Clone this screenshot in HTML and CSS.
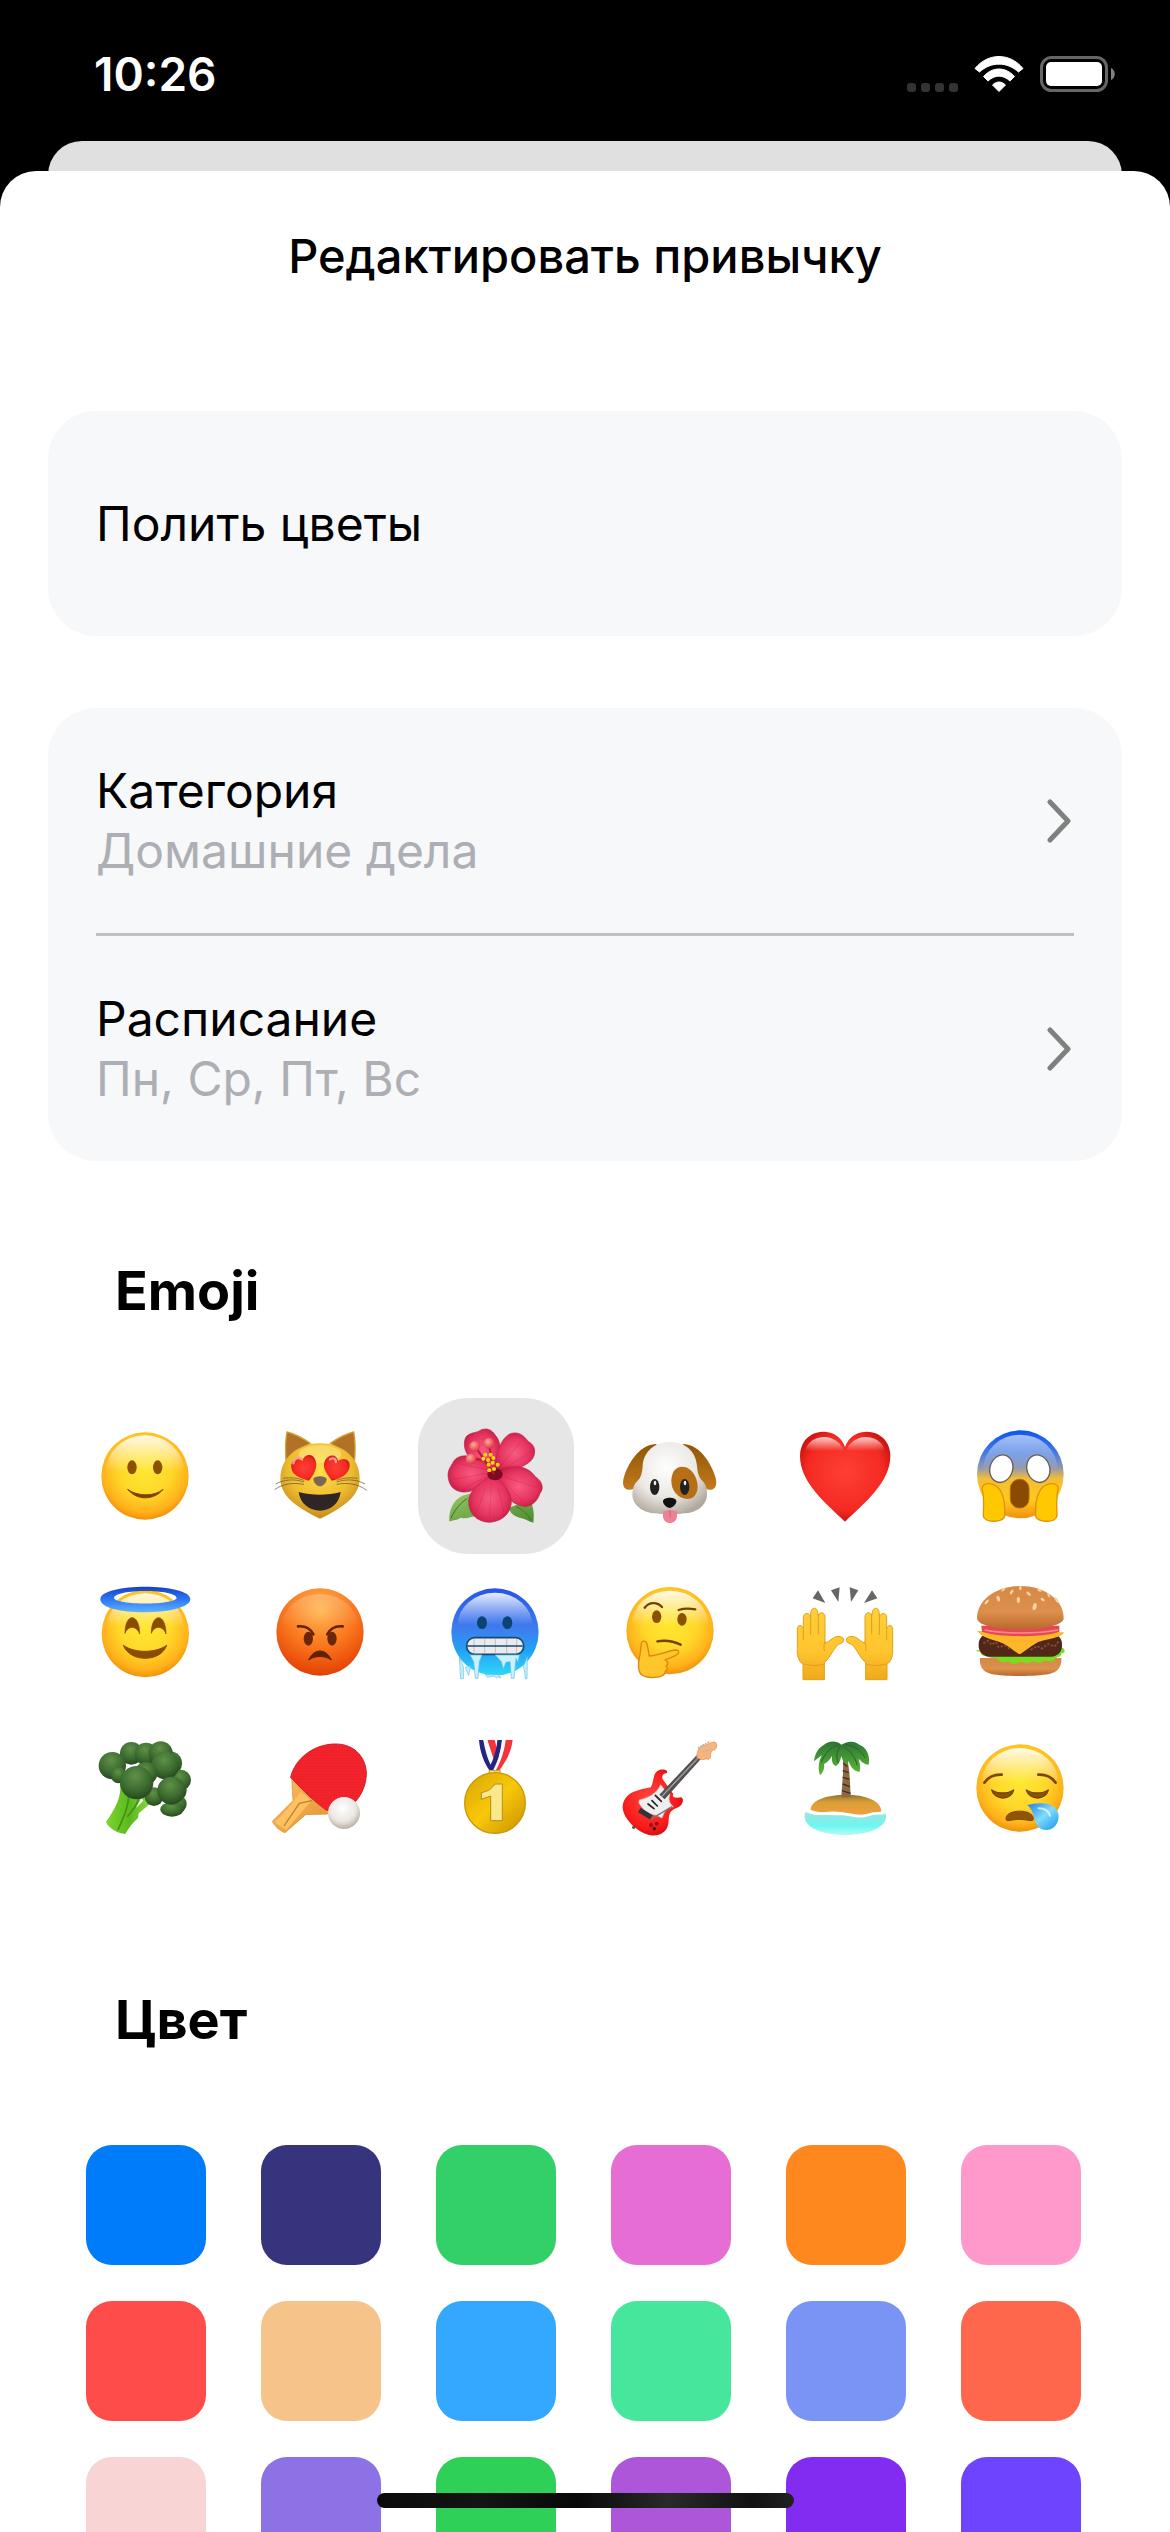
FILE: index.html
```html
<!DOCTYPE html>
<html lang="ru">
<head>
<meta charset="utf-8">
<meta name="viewport" content="width=device-width, initial-scale=1">
<title>Редактировать привычку</title>
<link rel="stylesheet" href="styles.css">
</head>
<body>
<svg class="defs" aria-hidden="true">
  <defs>
    <radialGradient id="yellow" cx=".5" cy=".42" r=".6"><stop offset="0" stop-color="#ffe832"/><stop offset=".5" stop-color="#ffd829"/><stop offset=".82" stop-color="#ffb21a"/><stop offset="1" stop-color="#ee8a08"/></radialGradient>
    <linearGradient id="shine" x1="0" y1="0" x2="0" y2="1"><stop offset="0" stop-color="#fff" stop-opacity=".9"/><stop offset=".5" stop-color="#fff" stop-opacity="0"/></linearGradient>
    <radialGradient id="angry" cx=".5" cy=".25" r=".78"><stop offset="0" stop-color="#ffb54f"/><stop offset=".5" stop-color="#fb7a20"/><stop offset="1" stop-color="#e23c02"/></radialGradient>
    <linearGradient id="cold" x1="0" y1="0" x2="0" y2="1"><stop offset="0" stop-color="#2456e8"/><stop offset=".45" stop-color="#3f7bee"/><stop offset=".7" stop-color="#22a0f5"/><stop offset="1" stop-color="#2fd8fb"/></linearGradient>
    <linearGradient id="scared" x1="0" y1="0" x2="0" y2="1"><stop offset="0" stop-color="#0a55f5"/><stop offset=".25" stop-color="#4479e0"/><stop offset=".42" stop-color="#8e96b4"/><stop offset=".55" stop-color="#f3bd35"/><stop offset=".8" stop-color="#ffc81f"/><stop offset="1" stop-color="#f0900f"/></linearGradient>
    <linearGradient id="halo" x1="0" y1="0" x2="0" y2="1"><stop offset="0" stop-color="#1740c4"/><stop offset=".5" stop-color="#2f78f5"/><stop offset="1" stop-color="#5cb4ff"/></linearGradient>
    <radialGradient id="catface" cx=".5" cy=".35" r=".65"><stop offset="0" stop-color="#ffe04a"/><stop offset=".6" stop-color="#efbd30"/><stop offset="1" stop-color="#c58a1c"/></radialGradient>
    <radialGradient id="red" cx=".5" cy=".45" r=".6"><stop offset="0" stop-color="#ff4034"/><stop offset=".7" stop-color="#f42a22"/><stop offset="1" stop-color="#bf0d0a"/></radialGradient>
    <radialGradient id="petal" cx=".5" cy=".5" r=".6"><stop offset="0" stop-color="#f75b82"/><stop offset=".6" stop-color="#e63560"/><stop offset="1" stop-color="#bd1740"/></radialGradient>
    <linearGradient id="leaf" x1="0" y1="0" x2="1" y2="1"><stop offset="0" stop-color="#96c764"/><stop offset="1" stop-color="#4d8a30"/></linearGradient>
    <radialGradient id="bead" cx=".4" cy=".35" r=".65"><stop offset="0" stop-color="#ffa9a0"/><stop offset="1" stop-color="#e2343c"/></radialGradient>
    <radialGradient id="white" cx=".45" cy=".35" r=".68"><stop offset="0" stop-color="#fff"/><stop offset=".6" stop-color="#ebe8e4"/><stop offset="1" stop-color="#b1a99d"/></radialGradient>
    <linearGradient id="ear" x1="0" y1="0" x2="0" y2="1"><stop offset="0" stop-color="#8f5607"/><stop offset="1" stop-color="#c37a1c"/></linearGradient>
    <radialGradient id="floret" cx=".45" cy=".3" r=".7"><stop offset="0" stop-color="#5f9147"/><stop offset=".6" stop-color="#3d6c30"/><stop offset="1" stop-color="#26491f"/></radialGradient>
    <linearGradient id="stalk" x1="0" y1="0" x2="1" y2="0"><stop offset="0" stop-color="#7bd62c"/><stop offset=".5" stop-color="#5cb81f"/><stop offset="1" stop-color="#8edc4a"/></linearGradient>
    <pattern id="rubber" width="8" height="8" patternUnits="userSpaceOnUse"><rect width="8" height="8" fill="#f8252d"/><path d="M0 7h6M7 0v5" stroke="#d41822" stroke-width="1.5"/></pattern>
    <linearGradient id="wood" x1="0" y1="0" x2="1" y2="1"><stop offset="0" stop-color="#ffc063"/><stop offset="1" stop-color="#e1912f"/></linearGradient>
    <linearGradient id="gold" x1="0" y1="0" x2="1" y2="1"><stop offset="0" stop-color="#d9a500"/><stop offset=".5" stop-color="#f8c80a"/><stop offset="1" stop-color="#c98e00"/></linearGradient>
    <linearGradient id="bun" x1="0" y1="0" x2="0" y2="1"><stop offset="0" stop-color="#d68a46"/><stop offset=".6" stop-color="#dd8f4c"/><stop offset="1" stop-color="#b9682c"/></linearGradient>
    <linearGradient id="hand" x1="0" y1="0" x2="0" y2="1"><stop offset="0" stop-color="#ffd03a"/><stop offset=".6" stop-color="#ffc42e"/><stop offset="1" stop-color="#f0a91c"/></linearGradient>
    <linearGradient id="sea" x1="0" y1="0" x2="0" y2="1"><stop offset="0" stop-color="#9fe3e0"/><stop offset=".6" stop-color="#6cf7f0"/><stop offset="1" stop-color="#b5fbf6"/></linearGradient>
    <linearGradient id="sand" x1="0" y1="0" x2="0" y2="1"><stop offset="0" stop-color="#8b7435"/><stop offset=".35" stop-color="#d99e35"/><stop offset="1" stop-color="#f0a040"/></linearGradient>
    <linearGradient id="frond" x1="0" y1="0" x2="0" y2="1"><stop offset="0" stop-color="#2c7536"/><stop offset="1" stop-color="#5fba33"/></linearGradient>
    <linearGradient id="drop" x1="0" y1="0" x2="1" y2="1"><stop offset="0" stop-color="#1b7fe0"/><stop offset=".5" stop-color="#7fdcff"/><stop offset="1" stop-color="#1594e8"/></linearGradient>
    <radialGradient id="body" cx=".45" cy=".45" r=".6"><stop offset="0" stop-color="#ff4a45"/><stop offset=".7" stop-color="#f91c1c"/><stop offset="1" stop-color="#cf0b0f"/></radialGradient>
    <path id="heart-eye" d="M0 40C-20 26-42 12-38-12-34-36-10-40 0-22 10-40 36-38 38-14 40 10 20 28 0 40z"/>
    <g id="palm-hand">
      <path d="M129 899v-46c-14-10-18-26-17-48v-58c0-14 16-14 18 0v-36c1-14 19-14 21 0l2-16c2-14 19-14 20 2l2 10c3-13 20-11 20 4v78c8-1 14-8 26-16 14-7 30-4 30 8-1 10-13 8-22 18-14 18-22 38-36 49v51z" fill="url(#hand)" stroke="#e0a11c" stroke-width="3"/>
      <path d="M130 750v30M152 710v54M175 704v58M195 786c-4 10-4 16-2 26M132 852c20 6 42 6 60 0" fill="none" stroke="#dd9f1c" stroke-width="3" stroke-linecap="round"/>
    </g>
  </defs>
</svg>

<header class="status">
  <time class="clock">10:26</time>
  <div class="status-icons">
    <svg width="51" height="36" viewBox="0 0 51 36" fill="#333"><rect y="27" width="9" height="9" rx="3"/><rect x="14" y="27" width="9" height="9" rx="3"/><rect x="28" y="27" width="9" height="9" rx="3"/><rect x="42" y="27" width="9" height="9" rx="3"/></svg>
    <svg width="50" height="36" viewBox="0 0 50 36" fill="#fff"><path d="M1 12.500C14-3.500 36-3.500 49 12.500L44.500 16C33 5.500 17 5.500 5.500 16z" stroke="#fff" stroke-linejoin="round"/><path d="M9.500 20.500c9-10 22-10 31 0L36 25c-7-6.500-15-6.500-22 0z" stroke="#fff" stroke-linejoin="round"/><path d="M18.500 29c4-4 9-4 13 0L25 35.500z" stroke="#fff" stroke-linejoin="round"/></svg>
    <svg width="75" height="36" viewBox="0 0 75 36"><rect x="1.500" y="1.500" width="65" height="33" rx="10" fill="none" stroke="#666" stroke-width="3"/><rect x="6" y="6" width="56" height="24" rx="5" fill="#fff"/><path d="M71 12c5 2 5 10 0 12z" fill="#808080"/></svg>
  </div>
</header>
<div class="backdrop"></div>

<main class="sheet">
  <h1 class="title">Редактировать привычку</h1>
  <form class="form">
    <input class="name" type="text" value="Полить цветы" aria-label="Название привычки">

    <div class="options">
      <button class="option" type="button">
        <span class="option-text"><span>Категория</span><span class="option-value">Домашние дела</span></span>
        <svg class="chevron" viewBox="0 0 24 44"><path d="M3 3l18 19L3 41"/></svg>
      </button>
      <hr class="divider">
      <button class="option" type="button">
        <span class="option-text"><span>Расписание</span><span class="option-value">Пн, Ср, Пт, Вс</span></span>
        <svg class="chevron" viewBox="0 0 24 44"><path d="M3 3l18 19L3 41"/></svg>
      </button>
    </div>

    <section class="picker">
      <h2 class="heading">Emoji</h2>
      <div class="grid">
        <label class="cell"><input class="emoji-input" type="radio" name="emoji" aria-label="Улыбка">
          <svg class="emoji" viewBox="114 144 288 288"><circle cx="255" cy="288" r="131" fill="url(#yellow)"/><ellipse cx="255" cy="275" rx="117" ry="109" fill="url(#shine)"/><ellipse cx="216" cy="262" rx="14" ry="21" fill="#8d5200"/><ellipse cx="293" cy="262" rx="14" ry="21" fill="#8d5200"/><path d="M203 328c28 34 78 34 106 0-24 22-78 22-106 0z" fill="#7d4200" stroke="#7d4200" stroke-width="3" stroke-linejoin="round"/></svg></label>
        <label class="cell"><input class="emoji-input" type="radio" name="emoji" aria-label="Влюблённый кот">
          <svg class="emoji" viewBox="639 144 288 288"><path d="M678 240c-2-30-2-60 3-84 24 6 50 20 70 34zM884 240c2-30 2-60-3-84-24 6-50 20-70 34z" fill="#b17227" stroke="#d6a133" stroke-width="4"/><path d="M780 190c60 0 119 38 119 106 0 58-62 92-119 120-57-28-119-62-119-120 0-68 59-106 119-106z" fill="url(#catface)"/><ellipse cx="780" cy="222" rx="64" ry="27" fill="#fff2a0" opacity=".45"/><use href="#heart-eye" transform="translate(734 264) rotate(-18)" fill="url(#red)"/><use href="#heart-eye" transform="translate(828 264) rotate(18)" fill="url(#red)"/><path d="M700 250c2-14 14-20 24-14M810 238c10-7 18 0 18 8" stroke="#ff9d98" stroke-width="7" fill="none" stroke-linecap="round"/><path d="M760 296c4-10 36-10 40 0 0 12-12 23-20 23s-20-11-20-23z" fill="#7b6653"/><path d="M716 336c40 11 86 11 126 0-4 34-30 56-62 56s-60-22-64-56z" fill="#2e2524"/><path d="M732 306c-30-10-60-8-85 6M732 313c-32-6-64-2-88 16M732 301c-22-8-42-9-62-6M830 306c30-10 60-8 85 6M830 313c32-6 64-2 90 18M830 301c22-8 42-9 62-6" fill="none" stroke="#5c4d35" stroke-width="2"/></svg></label>
        <label class="cell"><input class="emoji-input" type="radio" name="emoji" aria-label="Гибискус" checked>
          <svg class="emoji" viewBox="114 144 288 288"><path d="M118 425c-2-48 22-80 64-84l20 66c-20 2-34 12-50 6-10 8-22 6-34 12zM370 428c4-34-2-60-14-68l-60 24c6 20 22 26 36 30 12 2 22 10 38 14z" fill="url(#leaf)"/><path d="M122 415c14-28 30-46 50-60M364 420c-16-22-30-34-46-40" stroke="#3e7429" stroke-width="3" fill="none"/><g fill="url(#petal)" stroke="#c32148" stroke-width="2"><path d="M254 280c-50-20-98-50-90-98 4-24 28-22 42-28 20-14 40-6 50 12 20 20 20 70-2 114z"/><path d="M254 280c0-52 20-120 58-121 24-2 34 16 44 26 14 8 22 22 16 42-10 32-70 46-118 53z"/><path d="M254 280c-36 44-80 66-112 52-20-8-28-28-28-50 2-18 12-28 18-40 20-26 84-20 122 38z"/><path d="M256 278c40-26 94-26 120 12 22 14 26 36 14 50-8 26-30 44-54 38-38-8-68-46-80-100z"/><path d="M248 284c34 22 64 60 54 96-8 30-36 46-66 47-36-2-62-28-60-66 2-30 34-54 72-77z"/></g><path d="M244 310l-6 105M226 325l-26 72M264 325l18 72M235 270l-92-20M230 280l-100 18M240 286l-70 34M260 270l70-80M270 274l95-60M286 292l95 30M280 305l60 60M244 268l-50-80M250 262l-12-70" stroke="#b51b45" stroke-width="2" opacity=".4"/><ellipse cx="255" cy="283" rx="23" ry="18" fill="#7e0926"/><path d="M252 282l-58-84M246 250l-9-60M240 240l-56-3" stroke="#bb1837" stroke-width="6"/><g fill="#ffd90f"><circle cx="226" cy="224" r="6"/><circle cx="242" cy="224" r="6"/><circle cx="220" cy="236" r="6"/><circle cx="234" cy="240" r="6"/><circle cx="250" cy="234" r="6"/><circle cx="236" cy="254" r="6"/><circle cx="248" cy="248" r="6"/><circle cx="263" cy="254" r="6"/><circle cx="252" cy="267" r="6"/><circle cx="238" cy="271" r="6"/></g><g fill="url(#bead)"><circle cx="194" cy="199" r="16"/><circle cx="237" cy="190" r="16"/><circle cx="183" cy="237" r="16"/></g></svg></label>
        <label class="cell"><input class="emoji-input" type="radio" name="emoji" aria-label="Собака">
          <svg class="emoji" viewBox="639 144 288 288"><path d="M740 192c-44 0-80 44-98 98-6 22-2 36 12 39 24 2 38-22 52-42zM818 192c44 0 80 44 98 98 6 22 2 36-12 39-24 2-38-22-52-42z" fill="url(#ear)"/><path d="M780 186c46 0 78 28 81 72 2 18 4 32 16 44 12 12 14 26 14 40 0 38-36 58-70 58-16 4-66 4-82 0-34 0-72-20-72-58 0-18 6-32 18-42 10-10 12-28 13-42 3-44 36-72 82-72z" fill="url(#white)"/><path d="M817 260c28 0 46 34 46 60 0 20-12 37-30 37-28 0-50-24-49-56 1-24 12-41 33-41z" fill="#b66f14"/><ellipse cx="734" cy="321" rx="14" ry="24" fill="#222"/><ellipse cx="824" cy="321" rx="14" ry="24" fill="#222"/><ellipse cx="735" cy="309" rx="4" ry="7" fill="#eee"/><ellipse cx="825" cy="309" rx="4" ry="7" fill="#eee"/><path d="M759 390h42v18c0 28-42 28-42 0z" fill="#ee8196"/><path d="M780 392v20" stroke="#d05f79" stroke-width="3"/><path d="M780 384c-10 10-26 10-42 6M780 384c10 10 26 10 42 6" fill="none" stroke="#c5bdb2" stroke-width="3"/><path d="M759 364c0-14 40-14 40 0 0 10-12 20-20 20s-20-10-20-20z" fill="#111"/></svg></label>
        <label class="cell"><input class="emoji-input" type="radio" name="emoji" aria-label="Сердце">
          <svg class="emoji" viewBox="114 144 288 288"><path d="M255 425C195 368 120 306 120 228c0-84 110-98 135-27 25-71 136-57 136 27 0 78-76 140-136 197z" fill="url(#red)"/><path d="M133 232c-2-72 98-84 122-14 24-70 124-58 122 14-20 30-224 30-244 0z" fill="url(#shine)" opacity=".85"/></svg></label>
        <label class="cell"><input class="emoji-input" type="radio" name="emoji" aria-label="Крик ужаса">
          <svg class="emoji" viewBox="639 144 288 288"><ellipse cx="781" cy="283" rx="130" ry="132" fill="url(#scared)"/><ellipse cx="781" cy="270" rx="112" ry="106" fill="url(#shine)" opacity=".7"/><g fill="#fff" stroke="#675e53" stroke-width="4"><ellipse cx="724" cy="266" rx="34" ry="42" transform="rotate(18 724 266)"/><ellipse cx="835" cy="266" rx="34" ry="42" transform="rotate(-18 835 266)"/></g><rect x="751" y="298" width="56" height="86" rx="27" fill="#8b4a02" stroke="#b06b08" stroke-width="3"/><path d="M666 326c2-18 28-20 46-6 18 16 24 44 22 88-2 20-60 22-64 0 0-30 4-54-4-82zM895 326c-2-18-28-20-46-6-18 16-24 44-22 88 2 20 60 22 64 0 0-30-4-54 4-82z" fill="#ffc800" stroke="#df930b" stroke-width="4"/></svg></label>
        <label class="cell"><input class="emoji-input" type="radio" name="emoji" aria-label="Ангел">
          <svg class="emoji" viewBox="114 612 288 288"><circle cx="256" cy="761" r="131" fill="url(#yellow)"/><ellipse cx="256" cy="740" rx="115" ry="100" fill="url(#shine)"/><path fill-rule="evenodd" d="M121 658c0-50 270-50 270 0s-270 54-270 0zm41-4c4 22 184 22 188 0-4-28-184-28-188 0z" fill="url(#halo)"/><path d="M195 760c0-64 44-62 44 2-8-26-36-26-44-2zM274 760c0-64 44-62 44 2-8-26-36-26-44-2z" fill="#8a4c00" stroke="#8a4c00" stroke-width="2"/><path d="M190 796c34 24 96 24 130 0-18 52-110 52-130 0z" fill="#8a4c00" stroke="#8a4c00" stroke-width="3" stroke-linejoin="round"/></svg></label>
        <label class="cell"><input class="emoji-input" type="radio" name="emoji" aria-label="Злость">
          <svg class="emoji" viewBox="639 612 288 288"><circle cx="780" cy="756" r="131" fill="url(#angry)"/><ellipse cx="780" cy="742" rx="114" ry="100" fill="url(#shine)" opacity=".25"/><path d="M714 739c22-2 38 8 46 24M848 739c-22-2-38 8-46 24" fill="none" stroke="#632104" stroke-width="8" stroke-linecap="round"/><ellipse cx="745" cy="776" rx="14" ry="21" fill="#6b2606"/><ellipse cx="816" cy="776" rx="14" ry="21" fill="#6b2606"/><path d="M746 840c16-36 52-36 68 0-18-14-50-14-68 0z" fill="#632104" stroke="#632104" stroke-width="3"/></svg></label>
        <label class="cell"><input class="emoji-input" type="radio" name="emoji" aria-label="Мороз">
          <svg class="emoji" viewBox="114 612 288 288"><circle cx="255" cy="756" r="131" fill="url(#cold)"/><ellipse cx="255" cy="735" rx="112" ry="97" fill="url(#shine)"/><ellipse cx="216" cy="728" rx="15" ry="19" fill="#0a4472"/><ellipse cx="292" cy="728" rx="15" ry="19" fill="#0a4472"/><rect x="170" y="773" width="171" height="50" rx="24" fill="#eceaec" stroke="#14496f" stroke-width="5"/><path d="M192 776v44M224 776v44M256 776v44M290 776v44M320 776v44" stroke="#aaa" stroke-width="2"/><path d="M172 798h166" stroke="#14496f" stroke-width="4"/><path d="M180 825h36l-8 20-4 50h-8l-5-50zM256 825h72l-4 22-6-12-6 60h-8l-4-50-12 2-8 20-6-22zM148 830l12 30 0 36h-8zM166 862l16-4-6 28zM352 830l-12 30 4 14 2 22h5zM226 884h40l6 10-8-4-4 4-8-6-20 4z" fill="#c8f1fb" stroke="#5ebfe1" stroke-width="2"/></svg></label>
        <label class="cell"><input class="emoji-input" type="radio" name="emoji" aria-label="Раздумье">
          <svg class="emoji" viewBox="639 612 288 288"><circle cx="780" cy="752" r="131" fill="url(#yellow)"/><ellipse cx="780" cy="736" rx="115" ry="104" fill="url(#shine)"/><path d="M704 683c14-18 38-18 52-2M806 690c16-5 32-5 50-2M742 784c24-4 50 0 70 10" fill="none" stroke="#754000" stroke-width="7" stroke-linecap="round"/><ellipse cx="740" cy="710" rx="14" ry="19" fill="#8b5000"/><ellipse cx="816" cy="718" rx="14" ry="19" fill="#8b5000"/><path d="M694 792c2-14 16-10 18 4l6 32c28-2 56-16 80-18 12 0 10 12 0 16l-32 14c10 8 8 14 2 18 6 6 4 12-2 16 0 24-60 22-74 8-10-14-6-42-2-58z" fill="#ffc62c" stroke="#dc8711" stroke-width="4"/></svg></label>
        <label class="cell"><input class="emoji-input" type="radio" name="emoji" aria-label="Руки вверх">
          <svg class="emoji" viewBox="114 612 288 288"><path d="M174 631l22 38-38-14zM213 631l26-9-4 44zM269 622l26 9-22 35zM336 631l16 24-40 14z" fill="#666"/><use href="#palm-hand"/><use href="#palm-hand" transform="matrix(-1 0 0 1 510 0)"/></svg></label>
        <label class="cell"><input class="emoji-input" type="radio" name="emoji" aria-label="Бургер">
          <svg class="emoji" viewBox="639 612 288 288"><path d="M660 834h244c2 26-10 42-36 48-44 8-130 8-174 0-26-6-36-22-34-48z" fill="url(#bun)"/><path d="M650 810c20 4 20-6 50 4l170 4c20-4 26-24 42-12 6 10-2 14-8 14 0 14-12 8-18 16-10 18-24 2-36 8-14 12-26 0-34 0-12 12-26 0-36 2-14 10-26 6-36-2-16 8-30-2-34-10-14 2-22-2-34-6-12 0-14-8-14-14-10 2-14-2-12-4z" fill="#79dc20"/><rect x="656" y="760" width="250" height="70" rx="32" fill="#512719"/><path d="M670 790l14-8 10 12 14-8 8 16 20-6 16 14M812 810l20-12 14 8 18-14 20 8 12-16" stroke="#87503a" stroke-width="5" fill="none" stroke-dasharray="7 5"/><path d="M652 753l260 4c-8 20-60 18-86 34-16 10-32 22-46 32-18-8-28-20-42-28-24-16-70-16-86-42z" fill="#ffb628"/><path d="M664 737h234v18c-46 18-182 18-232 0z" fill="#e54854"/><path d="M674 750c60 12 160 12 220 0" stroke="#ff8a8e" stroke-width="4" fill="none"/><path d="M651 714c0-56 60-96 130-96s130 40 130 96c0 46-260 46-260 0z" fill="url(#bun)"/><g fill="#f6d3a0"><ellipse cx="755" cy="636" rx="4" ry="8" transform="rotate(35 755 636)"/><ellipse cx="781" cy="624" rx="4" ry="7"/><ellipse cx="806" cy="641" rx="4" ry="8" transform="rotate(-50 806 641)"/><ellipse cx="715" cy="656" rx="5" ry="9" transform="rotate(-20 715 656)"/><ellipse cx="775" cy="660" rx="5" ry="9"/><ellipse cx="824" cy="680" rx="6" ry="11" transform="rotate(12 824 680)"/><ellipse cx="680" cy="666" rx="4" ry="9" transform="rotate(40 680 666)"/><ellipse cx="848" cy="659" rx="4" ry="7" transform="rotate(-55 848 659)"/><ellipse cx="890" cy="660" rx="4" ry="9" transform="rotate(-35 890 660)"/><ellipse cx="838" cy="631" rx="3" ry="7" transform="rotate(-60 838 631)"/><ellipse cx="730" cy="629" rx="3" ry="7" transform="rotate(50 730 629)"/><ellipse cx="866" cy="646" rx="3" ry="7" transform="rotate(-30 866 646)"/></g></svg></label>
        <label class="cell"><input class="emoji-input" type="radio" name="emoji" aria-label="Брокколи">
          <svg class="emoji" viewBox="114 1080 288 288"><path d="M180 1210c6 40-14 76-42 116 8 20 36 34 58 36 8-16 22-34 38-48l2-14 44-36-70-40z" fill="url(#stalk)"/><path d="M206 1250c-2 40-18 66-32 100M236 1254c-4 24-20 38-34 56" stroke="#3f9413" stroke-width="5" fill="none"/><path d="M228 1284l16-30 6 8z" fill="#fff"/><g fill="url(#floret)"><circle cx="330" cy="1150" r="36"/><circle cx="362" cy="1200" r="31"/><circle cx="214" cy="1120" r="34"/><circle cx="258" cy="1122" r="34"/><circle cx="302" cy="1120" r="36"/><circle cx="157" cy="1157" r="41"/><circle cx="176" cy="1186" r="24"/><circle cx="344" cy="1230" r="36"/><circle cx="354" cy="1272" r="26"/><ellipse cx="336" cy="1288" rx="35" ry="22"/><circle cx="282" cy="1250" r="28"/><circle cx="316" cy="1156" r="42"/><circle cx="258" cy="1180" r="34"/><circle cx="334" cy="1232" r="42"/><circle cx="230" cy="1208" r="50"/></g></svg></label>
        <label class="cell"><input class="emoji-input" type="radio" name="emoji" aria-label="Настольный теннис">
          <svg class="emoji" viewBox="639 1080 288 288"><path d="M695 1190l112 112-70 2-62 54c-14-4-32-20-38-34l62-62z" fill="url(#wood)" stroke="#d98a28" stroke-width="2"/><path d="M722 1236l34 24-78 90-34-24c34-28 54-60 78-90z" fill="#ffc163"/><path d="M756 1262l-38 8-46 68" stroke="#c77b22" stroke-width="4" fill="none"/><path d="M692 1192c12-54 66-98 130-100 66-2 98 46 97 92-2 44-24 76-52 100-16 12-40 18-66 8-40-28-74-62-109-100z" fill="url(#rubber)" stroke="#d71b25" stroke-width="3"/><circle cx="852" cy="1299" r="48" fill="url(#white)"/></svg></label>
        <label class="cell"><input class="emoji-input" type="radio" name="emoji" aria-label="Золотая медаль">
          <svg class="emoji" viewBox="114 1080 288 288"><path d="M232 1080h22l16 60-14 34zM284 1080h24c-4 36-20 64-42 94h-16c20-30 30-62 34-94z" fill="#f5333b"/><path d="M207 1080h13l34 93h-14c-18-24-30-56-33-93zM262 1080h14c-4 36-12 64-28 94l-12-10c14-24 24-54 26-84z" fill="#232581"/><path d="M220 1080h12l18 54-8 20c-10-20-18-48-22-74zM276 1080h11c-4 36-16 68-30 92l-9 2c16-32 26-60 28-94z" fill="#fafafe"/><path d="M238 1180v-8h32v8z" fill="none" stroke="#d5a821" stroke-width="4"/><circle cx="255" cy="1269" r="91" fill="url(#gold)" stroke="#c99800" stroke-width="4"/><path d="M214 1238c20-4 32-12 40-26h23v110h-35v-74l-28 10z" fill="#fbe78c" stroke="#b78c16" stroke-width="3"/></svg></label>
        <label class="cell"><input class="emoji-input" type="radio" name="emoji" aria-label="Гитара">
          <svg class="emoji" viewBox="639 1080 288 288"><path d="M722 1222c12-18 4-44 26-52 16-4 28 2 22 10-10 0-16 8-12 18l32 44c-6 12 10 12 24 10 10 6 4 26-14 32-22 8-22 18-24 36 0 34-24 50-54 46-36-6-86-50-84-88 6-42 46-48 84-56z" fill="url(#body)"/><path d="M752 1214c10 12 14 22 28 28-6 16-2 28 10 38-26 4-28 22-34 34-16-10-38-10-52-22-14-18-20-22-16-32 30-8 50-18 64-46z" fill="#eee" stroke="#c9c1c1" stroke-width="2"/><path d="M748 1244l112-118 12 12-108 120z" fill="#55504f"/><path d="M756 1250l112-118M750 1254l112-120" stroke="#c9c9c9" stroke-width="2"/><path d="M860 1132c2-20 8-34 20-36 14-2 22-10 34-10 10 4 6 20 0 24-10-2-14 12-12 22-4 8-10 6-14 4-8 4-18 4-28-4z" fill="#f7b47c" stroke="#d78b52" stroke-width="2"/><path d="M864 1104l36-20M880 1116l24-10" stroke="#b4b6bd" stroke-width="5" stroke-dasharray="5 3"/><path d="M688 1290l36 22" stroke="#333" stroke-width="15"/><path d="M726 1262l16 16M736 1246l18 18M714 1272l18 14" stroke="#222" stroke-width="5" stroke-linecap="round"/><path d="M722 1318l64-38" stroke="#777" stroke-width="4"/><circle cx="723" cy="1335" r="6" fill="#a10b12"/><circle cx="740" cy="1331" r="6" fill="#a10b12"/><circle cx="733" cy="1346" r="5" fill="#222"/><circle cx="671" cy="1342" r="5" fill="#555"/></svg></label>
        <label class="cell"><input class="emoji-input" type="radio" name="emoji" aria-label="Остров">
          <svg class="emoji" viewBox="114 1080 288 288"><path d="M136 1296c-14 40 40 69 120 69s134-30 120-66c-26 10-210 10-240-3z" fill="url(#sea)"/><path d="M152 1290c0-32 54-46 108-46s106 18 104 52c-14 4-26-2-40 6-50 12-70-8-110-4-24 2-40-2-62-8z" fill="url(#sand)"/><path d="M138 1290c20 14 44 12 68 9 50-6 78 18 116 7 22-10 34-4 52-8" fill="none" stroke="#fff" stroke-width="8"/><path d="M248 1130c4 40-2 84-4 122h28c-2-44-2-84-12-122z" fill="#8e6743"/><path d="M250 1150l12 10M248 1172l18 6M248 1192l20 6M248 1212l22 8M246 1232l26 8" stroke="#42301e" stroke-width="4"/><path d="M244 1094c-14-14-40-12-54 2-18 10-26 30-28 48 8-8 16-10 24-20-8 16-14 36-6 62 12-10 14-26 12-34 10-4 18-14 24-24 0 12-2 24 12 30 10-6 14-20 16-30 4 12 8 24 20 24l2-10c4 14 10 28 32 34 6-14 0-28-2-40 8 8 14 16 30 18 6-30-8-52-28-60-16-14-36-10-54 0z" fill="url(#frond)"/><path d="M240 1094c-30 6-44 26-56 52M242 1098c-14 18-14 34-6 52M250 1098c20 14 34 30 42 58M254 1094c26 2 44 12 62 40" fill="none" stroke="#28652c" stroke-width="3"/></svg></label>
        <label class="cell"><input class="emoji-input" type="radio" name="emoji" aria-label="Сонный">
          <svg class="emoji" viewBox="639 1080 288 288"><circle cx="780" cy="1224" r="131" fill="url(#yellow)"/><ellipse cx="780" cy="1208" rx="115" ry="104" fill="url(#shine)"/><path d="M673 1208c12-17 30-25 52-24M887 1208c-12-17-30-25-52-24" fill="none" stroke="#7c4800" stroke-width="8" stroke-linecap="round"/><path d="M695 1230c18 12 48 12 66 0-8 32-56 32-66 0zM799 1230c18 12 48 12 66 0-8 32-56 32-66 0z" fill="#8a5500" stroke="#744200" stroke-width="4" stroke-linejoin="round"/><path d="M738 1316c0-30 82-30 82 0 0 12-18 2-42 2s-40 10-40-2z" fill="#8e5507" stroke="#7c4800" stroke-width="3"/><path d="M801 1275c30-8 92-14 95 34 0 24-16 41-37 41-44 0-28-56-58-75z" fill="url(#drop)"/><path d="M836 1285c18 0 30 8 34 22" stroke="#fff" stroke-width="6" fill="none" stroke-linecap="round" opacity=".7"/></svg></label>
      </div>
    </section>

    <section class="picker">
      <h2 class="heading">Цвет</h2>
      <div class="grid">
        <label class="cell"><input class="swatch azure" type="radio" name="color" aria-label="Синий"></label>
        <label class="cell"><input class="swatch navy" type="radio" name="color" aria-label="Тёмно-синий"></label>
        <label class="cell"><input class="swatch green" type="radio" name="color" aria-label="Зелёный"></label>
        <label class="cell"><input class="swatch orchid" type="radio" name="color" aria-label="Орхидея"></label>
        <label class="cell"><input class="swatch orange" type="radio" name="color" aria-label="Оранжевый"></label>
        <label class="cell"><input class="swatch pink" type="radio" name="color" aria-label="Розовый"></label>
        <label class="cell"><input class="swatch red" type="radio" name="color" aria-label="Красный"></label>
        <label class="cell"><input class="swatch peach" type="radio" name="color" aria-label="Персиковый"></label>
        <label class="cell"><input class="swatch sky" type="radio" name="color" aria-label="Голубой"></label>
        <label class="cell"><input class="swatch mint" type="radio" name="color" aria-label="Мятный"></label>
        <label class="cell"><input class="swatch cornflower" type="radio" name="color" aria-label="Васильковый"></label>
        <label class="cell"><input class="swatch coral" type="radio" name="color" aria-label="Коралловый"></label>
        <label class="cell"><input class="swatch blush" type="radio" name="color" aria-label="Бледно-розовый"></label>
        <label class="cell"><input class="swatch lavender" type="radio" name="color" aria-label="Лавандовый"></label>
        <label class="cell"><input class="swatch grass" type="radio" name="color" aria-label="Травяной"></label>
        <label class="cell"><input class="swatch purple" type="radio" name="color" aria-label="Пурпурный"></label>
        <label class="cell"><input class="swatch violet" type="radio" name="color" aria-label="Фиолетовый"></label>
        <label class="cell"><input class="swatch indigo" type="radio" name="color" aria-label="Индиго"></label>
      </div>
    </section>
  </form>
</main>
<div class="home-indicator"></div>
</body>
</html>
```
FILE: styles.css
```css
* {
  box-sizing: border-box;
}

body {
  display: flex;
  flex-direction: column;
  height: 100vh;
  margin: 0;
  overflow: hidden;
  background: #000;
  color: #000;
  font-family: Inter, "Liberation Sans", sans-serif;
}

.defs {
  position: absolute;
  width: 0;
  height: 0;
}

.status {
  display: flex;
  flex: none;
  align-items: center;
  justify-content: space-between;
  height: 141px;
  padding: 6px 55px 0 94px;
  color: #fff;
}

.clock {
  font-size: 46px;
  font-weight: 600;
  line-height: 60px;
}

.status-icons {
  display: flex;
  gap: 16px;
}

.backdrop {
  flex: none;
  height: 60px;
  margin: 0 48px -30px;
  border-radius: 34px 34px 0 0;
  background: #e0e0e0;
}

.sheet {
  position: relative;
  flex: 1;
  min-height: 0;
  padding: 55px 48px 0;
  overflow-y: auto;
  scrollbar-width: none;
  border-radius: 36px 36px 0 0;
  background: #fff;
}

.title {
  margin: 0 0 125px;
  font-size: 47px;
  font-weight: 500;
  line-height: 60px;
  text-align: center;
}

.form {
  display: flex;
  flex-direction: column;
}

.name,
.options {
  border: 0;
  border-radius: 48px;
  background: #f7f8fa;
}

.name {
  width: 100%;
  height: 225px;
  margin-bottom: 72px;
  padding: 0 48px;
  color: inherit;
  font: inherit;
  font-size: 48px;
}

.option {
  display: flex;
  align-items: center;
  justify-content: space-between;
  width: 100%;
  height: 225px;
  padding: 0 51px 0 48px;
  border: 0;
  background: none;
  color: inherit;
  font: inherit;
  font-size: 48px;
  line-height: 60px;
  text-align: left;
}

.option-text {
  display: flex;
  flex-direction: column;
}

.option-value {
  color: #aeafb4;
}

.chevron {
  width: 24px;
  height: 44px;
  fill: none;
  stroke: #808080;
  stroke-width: 5;
  stroke-linecap: round;
  stroke-linejoin: round;
}

.divider {
  height: 3px;
  margin: 0 48px;
  border: 0;
  background: #c0c0c2;
}

.picker {
  padding: 100px 23px 24px 20px;
}

.heading {
  margin: 0 0 77px 47px;
  font-size: 54px;
  font-weight: 700;
  line-height: 60px;
}

.grid {
  display: grid;
  grid-template-columns: repeat(6, 156px);
  justify-content: space-between;
}

.cell {
  display: grid;
  place-items: center;
  height: 156px;
}

.emoji-input,
.emoji {
  grid-area: 1 / 1;
}

.emoji-input {
  width: 156px;
  height: 156px;
  margin: 0;
  border-radius: 50px;
  appearance: none;
}

.emoji-input:checked {
  background: #e6e6e6;
}

.emoji {
  width: 96px;
  height: 96px;
  overflow: visible;
  pointer-events: none;
}

.swatch {
  width: 120px;
  height: 120px;
  margin: 0;
  border-radius: 26px;
  appearance: none;
}

.azure { background: #007bfa; }
.navy { background: #35347c; }
.green { background: #33cf69; }
.orchid { background: #e66dd4; }
.orange { background: #ff881e; }
.pink { background: #ff99cc; }
.red { background: #fd4c49; }
.peach { background: #f6c48b; }
.sky { background: #34a7fe; }
.mint { background: #46e69d; }
.cornflower { background: #7994f5; }
.coral { background: #ff674d; }
.blush { background: #f9d4d4; }
.lavender { background: #8d72e6; }
.grass { background: #2fd058; }
.purple { background: #ad56da; }
.violet { background: #832cf1; }
.indigo { background: #6e44fe; }

.home-indicator {
  position: fixed;
  bottom: 24px;
  left: 50%;
  width: 417px;
  height: 15px;
  margin-left: -208px;
  border-radius: 8px;
  background: linear-gradient(90deg, #0a0a0a, #141414 25%, #080808 48%, #2a2a2a 70%, #111 90%, #222);
}
```
